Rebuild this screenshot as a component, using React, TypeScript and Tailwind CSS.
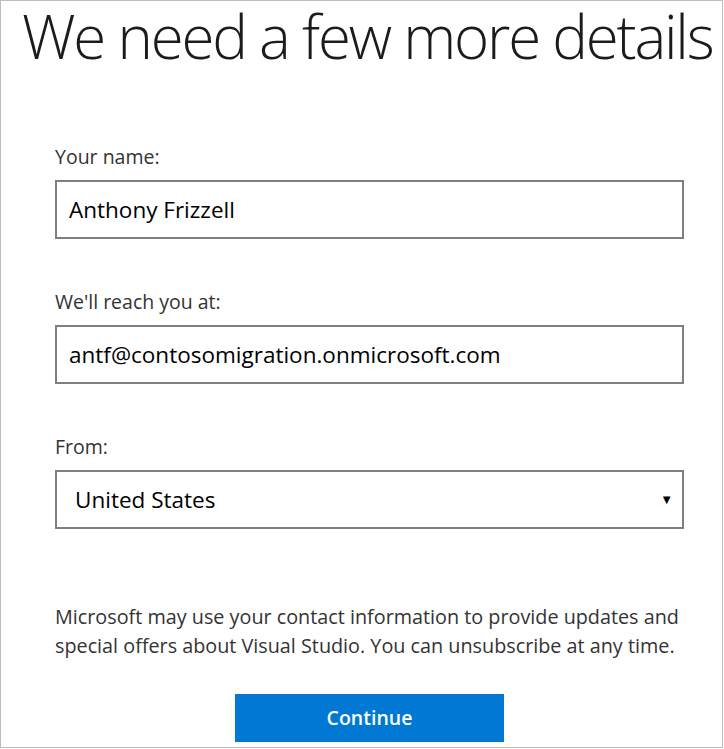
const Field = ({ label, value }: { label: string; value: string }) => (
  <div className="flex flex-col">
    <label className="text-[19.5px] leading-[24px] text-[#333]">{label}</label>
    <div className="mt-[11px] h-[59px] border-2 border-[#7f7f7f] flex items-center px-[12px] text-[22.5px] text-black">
      {value}
    </div>
  </div>
);

export default function App() {
  return (
    <div
      className="w-[723px] h-[748px] border border-[#bdbdbd] bg-white overflow-hidden"
      style={{ fontFamily: '"Open Sans", "Noto Sans", sans-serif' }}
    >
      <h1 className="pl-[21px] text-[60px] leading-[70px] tracking-[-2.2px] font-light text-[#1b1b1b] whitespace-nowrap">
        We need a few more details
      </h1>

      <div className="pl-[54px] pr-[38px] pt-[74px] flex flex-col gap-[51px]">
        <Field label="Your name:" value="Anthony Frizzell" />
        <Field label="We'll reach you at:" value="antf@contosomigration.onmicrosoft.com" />
        <div className="flex flex-col">
          <label className="text-[19.5px] leading-[24px] text-[#333]">From:</label>
          <div className="mt-[11px] h-[59px] border-2 border-[#7f7f7f] flex items-center justify-between pl-[18px] pr-[9px] text-[22.5px] text-black">
            <span>United States</span>
            <span className="text-[13px]">▼</span>
          </div>
        </div>
      </div>

      <p className="pl-[54px] pr-[30px] mt-[73px] text-[19.8px] leading-[29px] text-[#333]">
        Microsoft may use your contact information to provide updates and
        <br />
        special offers about Visual Studio. You can unsubscribe at any time.
      </p>

      <div className="flex justify-center pl-[54px] pr-[38px] mt-[34px]">
        <button className="w-[269px] h-[48px] bg-[#0078d4] text-white text-[19.5px] font-semibold">Continue</button>
      </div>
    </div>
  );
}
